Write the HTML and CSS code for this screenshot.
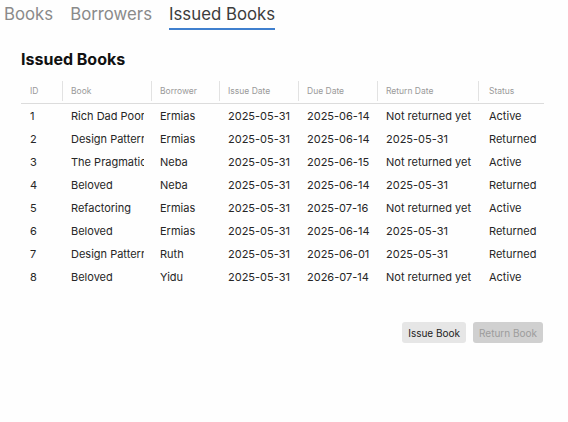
FILE: index.html
```html
<!DOCTYPE html>
<html>
<head>
<meta charset="utf-8">
<link rel="stylesheet" href="styles.css">
</head>
<body>
<nav class="tabs">
  <span class="tab">Books</span>
  <span class="tab">Borrowers</span>
  <span class="tab active">Issued Books</span>
</nav>
<main class="panel">
  <h1 class="title">Issued Books</h1>
  <div class="table">
    <div class="row head">
      <div class="cell">ID</div>
      <div class="cell sep">Book</div>
      <div class="cell sep">Borrower</div>
      <div class="cell sep">Issue Date</div>
      <div class="cell sep">Due Date</div>
      <div class="cell sep">Return Date</div>
      <div class="cell sep">Status</div>
    </div>
    <div class="row"><div class="cell">1</div><div class="cell"><span class="clip">Rich Dad Poor Dad</span></div><div class="cell">Ermias</div><div class="cell">2025-05-31</div><div class="cell">2025-06-14</div><div class="cell">Not returned yet</div><div class="cell">Active</div></div>
    <div class="row"><div class="cell">2</div><div class="cell"><span class="clip">Design Patterns</span></div><div class="cell">Ermias</div><div class="cell">2025-05-31</div><div class="cell">2025-06-14</div><div class="cell">2025-05-31</div><div class="cell">Returned</div></div>
    <div class="row"><div class="cell">3</div><div class="cell"><span class="clip">The Pragmatic Programmer</span></div><div class="cell">Neba</div><div class="cell">2025-05-31</div><div class="cell">2025-06-15</div><div class="cell">Not returned yet</div><div class="cell">Active</div></div>
    <div class="row"><div class="cell">4</div><div class="cell"><span class="clip">Beloved</span></div><div class="cell">Neba</div><div class="cell">2025-05-31</div><div class="cell">2025-06-14</div><div class="cell">2025-05-31</div><div class="cell">Returned</div></div>
    <div class="row"><div class="cell">5</div><div class="cell"><span class="clip">Refactoring</span></div><div class="cell">Ermias</div><div class="cell">2025-05-31</div><div class="cell">2025-07-16</div><div class="cell">Not returned yet</div><div class="cell">Active</div></div>
    <div class="row"><div class="cell">6</div><div class="cell"><span class="clip">Beloved</span></div><div class="cell">Ermias</div><div class="cell">2025-05-31</div><div class="cell">2025-06-14</div><div class="cell">2025-05-31</div><div class="cell">Returned</div></div>
    <div class="row"><div class="cell">7</div><div class="cell"><span class="clip">Design Patterns</span></div><div class="cell">Ruth</div><div class="cell">2025-05-31</div><div class="cell">2025-06-01</div><div class="cell">2025-05-31</div><div class="cell">Returned</div></div>
    <div class="row"><div class="cell">8</div><div class="cell"><span class="clip">Beloved</span></div><div class="cell">Yidu</div><div class="cell">2025-05-31</div><div class="cell">2026-07-14</div><div class="cell">Not returned yet</div><div class="cell">Active</div></div>
  </div>
  <div class="actions">
    <button class="btn">Issue Book</button>
    <button class="btn disabled">Return Book</button>
  </div>
</main>
</body>
</html>
```
FILE: styles.css
```css
html, body {
  margin: 0;
  padding: 0;
  background: #fefefe;
  font-family: Inter, "Noto Sans", sans-serif;
  color: #262626;
}
.tabs {
  display: flex;
  gap: 17px;
  padding-left: 4px;
}
.tab {
  font-size: 16.8px;
  line-height: 24px;
  padding: 2px 0;
  color: #8a8a8a;
  border-bottom: 2px solid transparent;
}
.tab.active {
  color: #3c3c3c;
  border-bottom-color: #3f7fce;
}
.panel {
  padding-left: 21px;
  width: 523px;
}
.title {
  font-size: 16px;
  line-height: 20px;
  font-weight: 700;
  margin: 19px 0 12px;
  color: #111;
}
.row {
  display: grid;
  grid-template-columns: 41px 89px 68px 79px 79px 101px 66px;
  height: 23px;
  align-items: center;
  font-size: 11px;
}
.row.head {
  height: 20px;
  padding: 0 0 2px;
  border-bottom: 1px solid #dcdcdc;
  font-size: 8.5px;
  color: #9a9a9a;
  align-items: stretch;
}
.head .cell {
  line-height: 21px;
}
.cell {
  padding: 0 7px 0 9px;
  white-space: nowrap;
  overflow: hidden;
}
.row .cell:last-child {
  padding-left: 11px;
}
.clip {
  display: block;
  overflow: hidden;
  white-space: nowrap;
}
.head .sep {
  border-left: 1px solid #e2e2e2;
  padding-left: 8px;
}
.head .sep:last-child {
  padding-left: 10px;
}
.actions {
  display: flex;
  justify-content: flex-end;
  gap: 7px;
  margin-top: 34px;
  margin-right: 1px;
}
.btn {
  font-family: Inter, "Noto Sans", sans-serif;
  font-size: 10px;
  height: 21px;
  padding: 0 6px;
  border: none;
  border-radius: 3px;
  background: #e6e6e6;
  color: #222;
}
.btn.disabled {
  background: #d0d0d0;
  color: #9c9c9c;
}
```
